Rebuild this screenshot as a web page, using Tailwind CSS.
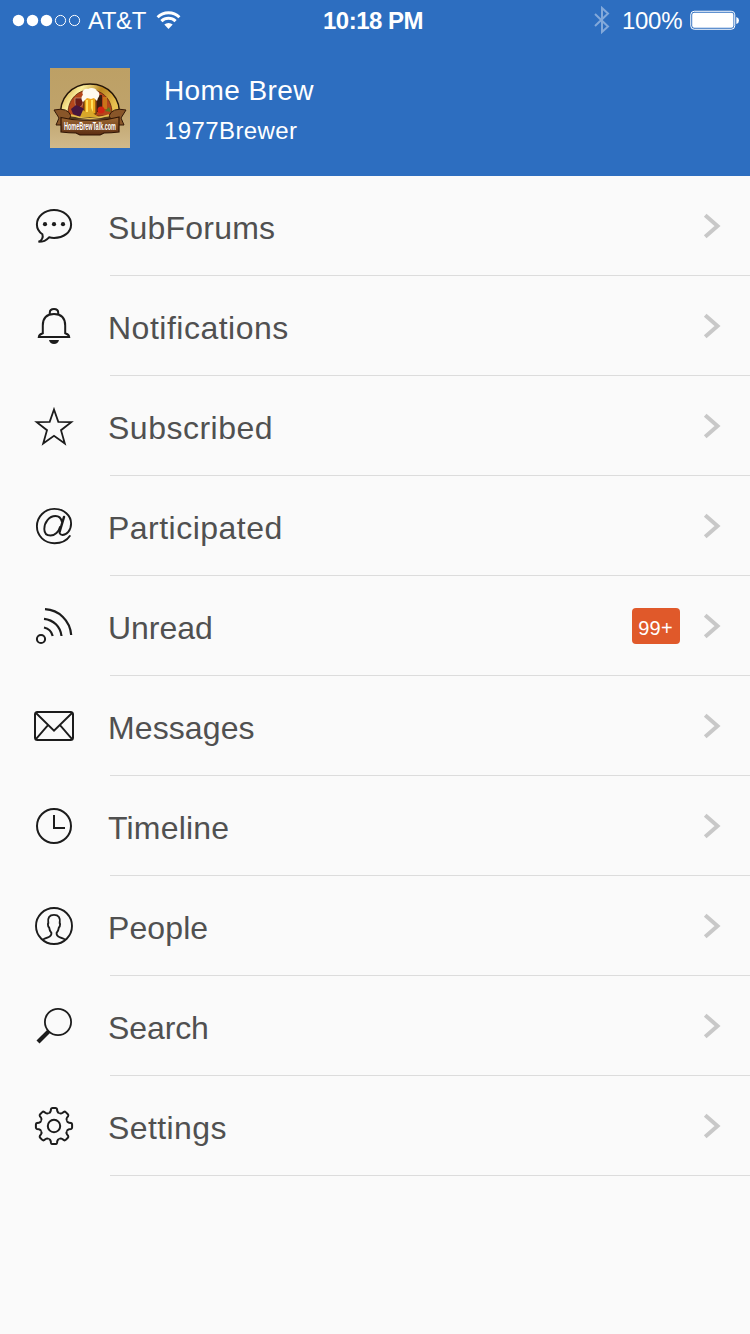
<!DOCTYPE html>
<html lang="en">
<head>
<meta charset="utf-8">
<title>Home Brew</title>
<script src="https://cdn.jsdelivr.net/npm/@tailwindcss/browser@4"></script>
</head>
<body class="w-[750px] h-[1334px] overflow-hidden bg-[#fafafa] font-['Liberation_Sans',Arial,sans-serif] text-[#505050]">
<svg class="hidden">
  <symbol id="chevron" viewBox="0 0 18 26"><path d="M2.2 2.2 14.5 13 2.2 23.8" fill="none" stroke="#c8c8c8" stroke-width="4"/></symbol>
</svg>
<header class="h-[176px] bg-[#2d6ec0] text-white">
  <div class="h-10 flex items-center justify-between relative pl-[12px] pr-[10px]">
    <div class="flex items-center">
      <svg class="w-[70px] h-[14px]" viewBox="0 0 70 14"><g fill="#fff"><circle cx="6.5" cy="7.5" r="5.7"/><circle cx="20.5" cy="7.5" r="5.7"/><circle cx="34.5" cy="7.5" r="5.7"/></g><g fill="none" stroke="#fff" stroke-width="1"><circle cx="48.5" cy="7.5" r="5.1"/><circle cx="62.5" cy="7.5" r="5.1"/></g></svg>
      <span class="ml-[6px] mt-[2px] w-[58px] text-[24px] leading-[28px] tracking-[-0.4px] whitespace-nowrap">AT&amp;T</span>
      <svg class="ml-[10px] w-[26px] h-[20px]" viewBox="0 0 26 20"><g fill="none" stroke="#fff" stroke-width="3"><path d="M1.6 7.2a15.6 15.6 0 0 1 21.8 0"/><path d="M5.4 11.2a10.2 10.2 0 0 1 14.2 0"/></g><path d="M12.5 19 8.3 14.6a6 6 0 0 1 8.4 0z" fill="#fff"/></svg>
    </div>
    <div class="absolute left-[323px] top-[7px] text-[24px] leading-[28px] font-bold tracking-[-0.5px] whitespace-nowrap">10:18 PM</div>
    <div class="flex items-center">
      <svg class="w-[18px] h-[28px]" viewBox="0 0 18 28"><path d="M2 8 15 20.5 9 26V2l6 5.500L2 20" fill="none" stroke="#83a9da" stroke-width="2"/></svg>
      <span class="ml-[11px] mt-px w-[61px] text-[24px] leading-[28px] tracking-[-0.3px] whitespace-nowrap">100%</span>
      <svg class="ml-[7px] w-[50px] h-[20px]" viewBox="0 0 50 20"><rect x=".75" y="1.25" width="44" height="18" rx="3.5" fill="none" stroke="#fff" stroke-width="1"/><rect x="2.200" y="2.800" width="41.200" height="15" rx="2" fill="#fff"/><path d="M46.300 7q2.700.8 2.700 3.500t-2.700 3.500z" fill="#fff"/></svg>
    </div>
  </div>
  <div class="flex pl-[50px] pt-[28px]">
    <svg class="w-20 h-20" viewBox="0 0 80 80">
      <defs>
        <linearGradient id="bg" x2="0" y2="1"><stop stop-color="#bda065"/><stop offset=".55" stop-color="#bfa36b"/><stop offset="1" stop-color="#d0b98b"/></linearGradient>
        <linearGradient id="gold" x2="1" y2=".4"><stop stop-color="#c68c1d"/><stop offset=".35" stop-color="#fbf0a0"/><stop offset=".65" stop-color="#b9851f"/><stop offset="1" stop-color="#e8bf50"/></linearGradient>
        <linearGradient id="rib" x2="0" y2="1"><stop stop-color="#a06a35"/><stop offset="1" stop-color="#5b2d12"/></linearGradient>
      </defs>
      <rect width="80" height="80" fill="url(#bg)"/>
      <path d="M11 50C8 30 22 16 40 16s32 14 29 34z" fill="url(#gold)" stroke="#241508" stroke-width="1.500"/>
      <path d="M18 48C17 32 27 22 40 22s23 10 22 26z" fill="#b4461b" stroke="#5d260d" stroke-width=".8"/>
      <path d="M25 30h8v5q-1 4-3 4v5h3v1h-8v-1h3v-5q-3 0-3-4z" fill="#6b1c17" stroke="#e6c6a0" stroke-width=".5"/>
      <rect x="47" y="27" width="5" height="17" fill="#3a1d10"/><rect x="53" y="29" width="4" height="12" fill="#c97419"/>
      <path d="M34 29h12v17H34z" fill="#eda51b" stroke="#3e2207" stroke-width="1"/><path d="M37 32v12M42 32v12" stroke="#ffe05b" stroke-width="2"/>
      <path d="M33 34c-2-2-2-6 0-7-2-4 2-7 5-6 3-2 8-1 9 2 3 1 3 5 1 7l-1 3-3-3-3 1-4-1z" fill="#fffaf0"/>
      <path d="M21 41l5-4 7 3 2 6-5 3-7-3z" fill="#46163e"/>
      <circle cx="51" cy="42" r="3.500" fill="#cf2413"/>
      <path d="M33 42l4 3 4-5 3 6 5 3H30z" fill="#d8a82a"/>
      <path d="M55 43l4-4 2 5z" fill="#5b7920"/>
      <path d="M4 42q14-3 17 6l-6 9H6l3-7zM76 42q-14-3-17 6l6 9h9l-3-7z" fill="#895629" stroke="#341a09" stroke-width="1"/>
      <path d="M11 49.500Q25 53 40 52q15 1 29-3v15q-8 1-15 1l-4 2H30l-4-2q-7 0-15-1z" fill="url(#rib)" stroke="#301505" stroke-width="1.200"/>
      <path d="M21 47q19 7 38 0" fill="none" stroke="#e5bf52" stroke-width="1.500"/>
      <text x="14" y="62" textLength="52" lengthAdjust="spacingAndGlyphs" font-family="Liberation Sans Narrow, Liberation Sans" font-weight="bold" font-size="10.500" fill="#fff">HomeBrewTalk.com</text>
    </svg>
    <div class="ml-[34px] pt-[7px] whitespace-nowrap">
      <div class="text-[28px] leading-8 tracking-[0.4px]">Home Brew</div>
      <div class="mt-[10px] text-[24px] leading-7 tracking-[0.4px]">1977Brewer</div>
    </div>
  </div>
</header>
<main class="text-[32px] leading-9 [&_a]:flex [&_a]:h-[100px] [&_a]:pl-[34px] [&_a>div]:ml-9 [&_a>div]:flex [&_a>div]:flex-1 [&_a>div]:h-[100px] [&_a>div]:relative [&_a>div]:items-center [&_a>div]:whitespace-nowrap [&_i]:absolute [&_i]:left-0 [&_i]:right-0 [&_i]:bottom-0 [&_i]:h-px [&_i]:bg-[#dcdcdc] [&_span]:-ml-[2px] [&_span]:mt-[3px]">
  <a><svg class="w-10 h-10 mt-[30px]" viewBox="0 0 40 40" fill="none" stroke="#1c1c1c" stroke-width="2"><path d="M4.500 35.800C8.200 34.500 9.300 31 8.400 28.300 5 25.800 2.900 22.300 2.900 18.400 2.900 10.500 10.500 3.900 20 3.900S37.100 10.500 37.100 18.400 29.500 31.900 20 31.900q-2.500 0-4.900-.6Q11 35.900 4.500 35.800z"/><g fill="#1c1c1c" stroke="none"><circle cx="11" cy="18.200" r="2.100"/><circle cx="20" cy="18.200" r="2.100"/><circle cx="29" cy="18.200" r="2.100"/></g></svg>
    <div><span class="tracking-[0.2px]">SubForums</span><svg class="w-[18px] h-[26px] ml-auto mr-[29px]"><use href="#chevron"/></svg><i></i></div></a>
  <a><svg class="w-10 h-10 mt-[30px]" viewBox="0 0 40 40" fill="none" stroke="#1c1c1c" stroke-width="2"><path d="M4.800 31H35.200Q34.900 28.500 31.200 27.300V19.500C31.200 12 27.500 7.900 20 7.900S8.800 12 8.800 19.500V27.300Q5.100 28.500 4.800 31z"/><path d="M15.800 8V6.500Q15.800 2.900 20 2.900t4.200 3.600V8"/><path d="M15 34h10q-1 3.900-5 3.900T15 34z" fill="#1c1c1c" stroke="none"/></svg>
    <div><span class="tracking-[0.5px]">Notifications</span><svg class="w-[18px] h-[26px] ml-auto mr-[29px]"><use href="#chevron"/></svg><i></i></div></a>
  <a><svg class="w-10 h-10 mt-[30px]" viewBox="0 0 40 40" fill="none" stroke="#1c1c1c" stroke-width="1.800"><path d="M20 3.500 24.300 15.900 37.300 16.100 27 24.200 30.800 37.500 20 29.800 9.200 37.500 13 24.200 2.700 16.100 15.700 15.900z"/></svg>
    <div><span class="tracking-[0.5px]">Subscribed</span><svg class="w-[18px] h-[26px] ml-auto mr-[29px]"><use href="#chevron"/></svg><i></i></div></a>
  <a><svg class="w-10 h-10 mt-[30px]" viewBox="0 0 40 40" fill="none" stroke="#1c1c1c" stroke-width="1.900" stroke-linecap="round"><path d="M35.800 30C33 34.300 27 37.200 20.500 37.200 10.500 37.200 2.900 29.900 2.900 20.300S10.800 2.900 20.300 2.900C30 2.900 37.100 9.500 37.100 17.500 37.100 24.600 32.500 29 28.500 29 25.700 29 25.200 27 25.700 24.500"/><path d="M30 11 25.700 25.500" stroke-width="2.500"/><path d="M27.800 15.500C27 12 24.700 10 21.500 10 15 10 10.300 16.500 10.300 23 10.300 27 12.700 29.500 16.500 29.500 21 29.500 24.800 25.500 26 21"/></svg>
    <div><span class="tracking-[0.48px]">Participated</span><svg class="w-[18px] h-[26px] ml-auto mr-[29px]"><use href="#chevron"/></svg><i></i></div></a>
  <a><svg class="w-10 h-10 mt-[30px]" viewBox="0 0 40 40" fill="none" stroke="#1c1c1c" stroke-width="2.200"><circle cx="7" cy="33" r="4.100" stroke-width="2"/><path d="M10 21.500Q17 23 18.700 30M10 12.800C19.500 13.800 26.500 20.500 27.500 30M11 3.200C25 4 36 14.500 37.200 29"/></svg>
    <div><span class="tracking-[-0.05px]">Unread</span><b class="ml-auto mr-[23px] flex h-9 w-12 items-center justify-center rounded-[4px] bg-[#e0592a] pt-[4px] pr-px text-[20px] font-normal leading-6 tracking-[0.2px] text-white">99+</b><svg class="w-[18px] h-[26px] mr-[29px]"><use href="#chevron"/></svg><i></i></div></a>
  <a><svg class="w-10 h-10 mt-[30px]" viewBox="0 0 40 40" fill="none" stroke="#1c1c1c" stroke-width="2"><rect x="1" y="6" width="38" height="28" rx="2.500"/><path d="M1.700 6.700 20 24.700 38.300 6.700M1.700 33.300 14 19.200M38.300 33.300 26 19.200" stroke-width="1.900"/></svg>
    <div><span class="tracking-[0.1px]">Messages</span><svg class="w-[18px] h-[26px] ml-auto mr-[29px]"><use href="#chevron"/></svg><i></i></div></a>
  <a><svg class="w-10 h-10 mt-[30px]" viewBox="0 0 40 40" fill="none" stroke="#1c1c1c" stroke-width="2"><circle cx="20" cy="20" r="17"/><path d="M20 9v13h11"/></svg>
    <div><span class="tracking-[0.2px]">Timeline</span><svg class="w-[18px] h-[26px] ml-auto mr-[29px]"><use href="#chevron"/></svg><i></i></div></a>
  <a><svg class="w-10 h-10 mt-[30px]" viewBox="0 0 40 40" fill="none" stroke="#1c1c1c" stroke-width="1.900"><circle cx="20" cy="20" r="18"/><path d="M8.500 33.800Q9.500 32.900 14 31.300 17.700 30 17.400 26.800 15.500 24.800 15.100 21.400 13.900 20.500 13.900 18 14 17.200 14.300 17 13 8.900 20 8.900 27 8.900 25.700 17 26 17.200 26.100 18 26.100 20.500 24.900 21.400 24.500 24.800 22.600 26.800 22.300 30 26 31.300 30.500 32.900 31.500 33.800"/></svg>
    <div><span class="tracking-[0.1px]">People</span><svg class="w-[18px] h-[26px] ml-auto mr-[29px]"><use href="#chevron"/></svg><i></i></div></a>
  <a><svg class="w-10 h-10 mt-[30px]" viewBox="0 0 40 40" fill="none" stroke="#1c1c1c"><circle cx="24" cy="16" r="13.100" stroke-width="1.800"/><path d="M14.800 25.200 4 36" stroke-width="4.200"/></svg>
    <div><span class="tracking-[-0.1px]">Search</span><svg class="w-[18px] h-[26px] ml-auto mr-[29px]"><use href="#chevron"/></svg><i></i></div></a>
  <a><svg class="w-10 h-10 mt-[30px]" viewBox="-20 -20 40 40" fill="none" stroke="#1c1c1c" stroke-width="2"><defs><path id="tooth" d="M-5.360-12.950Q-3.600-13.200-3.300-15L-3-17Q-2.700-18.100-1.500-18.100H1.500Q2.700-18.100 3-17L3.300-15Q3.600-13.200 5.360-12.950"/></defs><circle r="6.200"/><use href="#tooth"/><use href="#tooth" transform="rotate(45)"/><use href="#tooth" transform="rotate(90)"/><use href="#tooth" transform="rotate(135)"/><use href="#tooth" transform="rotate(180)"/><use href="#tooth" transform="rotate(225)"/><use href="#tooth" transform="rotate(270)"/><use href="#tooth" transform="rotate(315)"/></svg>
    <div><span class="tracking-[0.4px]">Settings</span><svg class="w-[18px] h-[26px] ml-auto mr-[29px]"><use href="#chevron"/></svg><i></i></div></a>
</main>
</body>
</html>
